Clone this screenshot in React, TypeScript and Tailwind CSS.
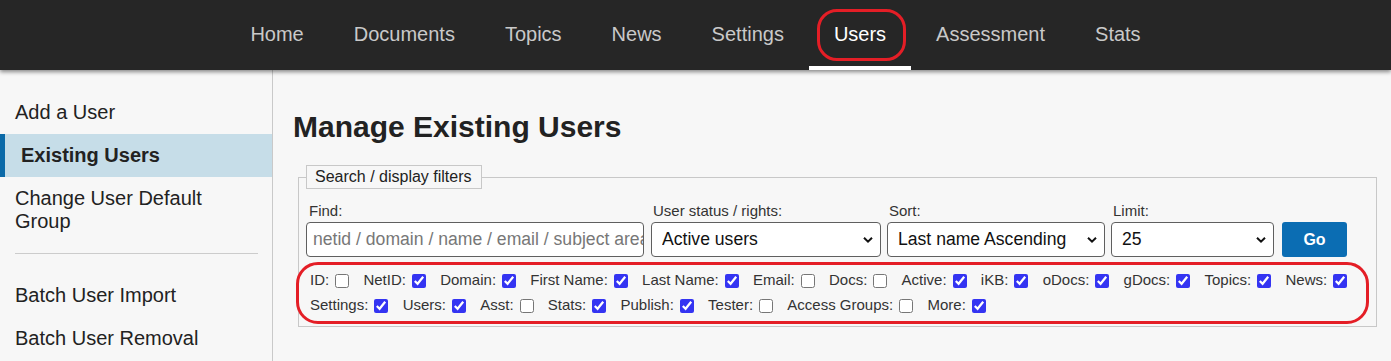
import React from 'react';

const navItems = ['Home', 'Documents', 'Topics', 'News', 'Settings', 'Users', 'Assessment', 'Stats'];

const columns: [string, boolean][] = [
    ['ID', false], ['NetID', true], ['Domain', true], ['First Name', true], ['Last Name', true],
    ['Email', false], ['Docs', false], ['Active', true], ['iKB', true], ['oDocs', true],
    ['gDocs', true], ['Topics', true], ['News', true], ['Settings', true], ['Users', true],
    ['Asst', false], ['Stats', true], ['Publish', true], ['Tester', false], ['Access Groups', false],
    ['More', true],
];

function Chevron() {
    return (
        <svg className="absolute right-[8px] top-1/2 -translate-y-1/2 pointer-events-none" width="10" height="7" viewBox="0 0 10 7">
            <path d="M1 1.2 L5 5.2 L9 1.2" fill="none" stroke="#111" strokeWidth="2" />
        </svg>
    );
}

function Select({ width, value, options }: { width: string, value: string, options: string[] }) {
    return (
        <div className={`relative ${width}`}>
            <select
                defaultValue={value}
                className="appearance-none w-full h-[35px] bg-white border border-[#5f5f5f] rounded-[4px] pl-[10px] pr-6 text-[17.6px] text-[#111] outline-none"
            >
                {options.map((o) => <option key={o}>{o}</option>)}
            </select>
            <Chevron />
        </div>
    );
}

export default function App() {
    return (
        <div className="min-h-screen bg-[#f7f7f7] text-[#222]" style={{ fontFamily: '"Liberation Sans", Arial, sans-serif' }}>
            {/* Top nav */}
            <header className="relative z-10 h-[70px] bg-[#262626] shadow-[0_2px_4px_rgba(0,0,0,0.45)] flex justify-center">
                {navItems.map((item) => {
                    const active = item === 'Users';
                    return (
                        <a
                            key={item}
                            className={`relative h-full flex items-center pb-[2px] px-[25px] text-[20px] ${active ? 'text-white' : 'text-[#c9c9c9]'}`}
                        >
                            {item}
                            {active && (
                                <>
                                    <span className="absolute left-0 right-0 bottom-0 h-[4px] bg-white" />
                                    <span className="absolute left-[8px] right-[5px] top-[9px] bottom-[9px] border-[3.5px] border-[#e41e26] rounded-[20px] pointer-events-none" />
                                </>
                            )}
                        </a>
                    );
                })}
            </header>

            <div className="flex">
                {/* Sidebar */}
                <aside className="w-[273px] shrink-0 border-r border-[#c9c9c9] pt-[21px] min-h-[291px] text-[20px] leading-[23px]">
                    <div className="py-[10px] pl-[15px]">Add a User</div>
                    <div className="py-[10px] pl-[16px] border-l-[5px] border-[#0b6aa8] bg-[#c6dde8] font-bold">Existing Users</div>
                    <div className="py-[10px] pl-[15px] pr-[40px]">Change User Default Group</div>
                    <div className="mt-[10px] ml-[15px] mr-[14px] h-px bg-[#cccccc]" />
                    <div className="mt-[20px] py-[10px] pl-[15px]">Batch User Import</div>
                    <div className="py-[10px] pl-[15px]">Batch User Removal</div>
                </aside>

                {/* Main */}
                <main className="flex-1 pl-[20px] pr-[14px] pt-[39px]">
                    <h1 className="text-[30px] leading-[36px] font-bold text-[#222]">Manage Existing Users</h1>

                    <fieldset className="mt-[20px] ml-[5px] border border-[#c8c8c8] pl-[7px] pr-[8px] pt-[13px] pb-[8px]">
                        <legend className="border border-[#c8c8c8] pl-[8px] pr-[9px] text-[16px] leading-[22px] text-[#222]">Search / display filters</legend>

                        <div className="flex items-end">
                            <div className="w-[338px]">
                                <div className="text-[15px] leading-[18px] pl-[3px] mb-[2px] text-[#333]">Find:</div>
                                <input
                                    type="text"
                                    placeholder="netid / domain / name / email / subject area"
                                    className="w-full h-[35px] bg-white border border-[#5f5f5f] rounded-[4px] pl-[6px] text-[17.6px] placeholder-[#777] outline-none"
                                />
                            </div>
                            <div className="ml-[7px]">
                                <div className="text-[15px] leading-[18px] pl-[2px] mb-[2px] text-[#333]">User status / rights:</div>
                                <Select width="w-[230px]" value="Active users" options={['Active users', 'Inactive users', 'All users']} />
                            </div>
                            <div className="ml-[6px]">
                                <div className="text-[15px] leading-[18px] pl-[2px] mb-[2px] text-[#333]">Sort:</div>
                                <Select width="w-[218px]" value="Last name Ascending" options={['Last name Ascending', 'Last name Descending']} />
                            </div>
                            <div className="ml-[6px]">
                                <div className="text-[15px] leading-[18px] pl-[2px] mb-[2px] text-[#333]">Limit:</div>
                                <Select width="w-[163px]" value="25" options={['25', '50', '100']} />
                            </div>
                            <button className="ml-[8px] w-[65px] h-[35px] rounded-[3px] bg-[#0b6db3] text-white font-bold text-[16px]">Go</button>
                        </div>

                        <div className="relative mt-[11px] pl-[4px] flex flex-wrap text-[15px] text-[#333]">
                            {columns.map(([name, on]) => (
                                <label key={name} className="h-[25px] flex items-center mr-[14.25px]">
                                    <span>{name}:</span>
                                    <input type="checkbox" defaultChecked={on} className="ml-[6px] w-[14px] h-[14px] accent-[#3434f2]" />
                                </label>
                            ))}
                            <span className="absolute -left-[10px] -right-[1px] -top-[6px] -bottom-[6px] border-[3.5px] border-[#e41e26] rounded-[22px] pointer-events-none" />
                        </div>
                    </fieldset>
                </main>
            </div>
        </div>
    );
}
